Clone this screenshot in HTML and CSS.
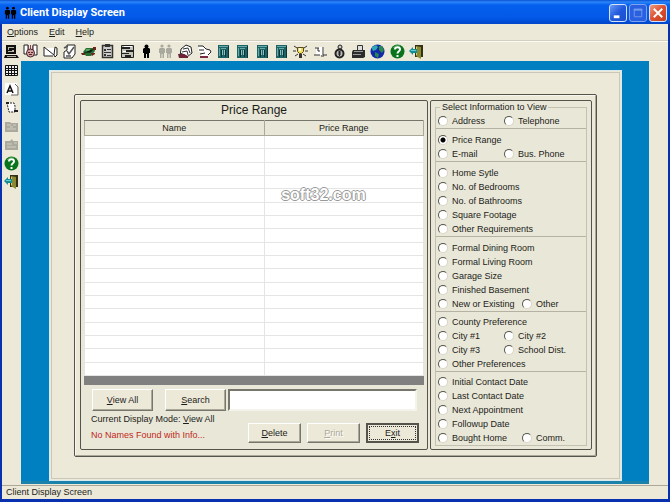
FILE: index.html
```html
<!DOCTYPE html>
<html lang="en">
<head>
    <meta charset="UTF-8">
    <meta name="viewport" content="width=device-width, initial-scale=1.0">
    <title>Client Display Screen</title>
    <link rel="stylesheet" href="styles.css">
</head>
<body>
    <!-- shared icons -->
    <svg class="sprite" aria-hidden="true">
        <symbol id="building" viewBox="0 0 15 15">
            <path fill="#1d6468" d="M2 1h11v13H2z"/>
            <path fill="#69aaa7" d="M3 2h9v1H3zM3 4h1v8H3zM5 4h5v1H5z"/>
            <path fill="#0b3438" d="M5 6h1v7H5zM9 6h1v7H9zM12 2h1v12h-1z"/>
            <path fill="#8fc0bb" d="M6 6h1v5H6zM8 6h1v5H8z"/>
        </symbol>
        <symbol id="help" viewBox="0 0 15 15">
            <circle cx="7.500" cy="7.500" r="7" fill="#08751c"/>
            <path d="M3 4a6 6 0 0 1 7-2" fill="none" stroke="#4eaa55"/>
            <path d="M5 5.500c0-3 5-3 5 0 0 2-2.500 1.500-2.500 4" fill="none" stroke="#fff" stroke-width="2"/>
            <path fill="#fff" d="M6.500 11h2v2h-2z"/>
        </symbol>
        <symbol id="door" viewBox="0 0 15 15">
            <path fill="#343018" d="M6 1h8v12H6z"/>
            <path fill="#8a8a32" d="M7 2l5 1v12l-5-3z"/>
            <path fill="#d4ce72" d="M7 3h1v8H7z"/>
            <path fill="#168c94" d="M0 7l4-4v2h4v4H4v2z"/>
            <path fill="#65d0d3" d="M2 6h5v1H2z"/>
        </symbol>
        <symbol id="people" viewBox="0 0 15 15">
            <circle cx="4" cy="2" r="1.600"/><circle cx="11" cy="2" r="1.600"/>
            <path d="M2 4h4l1 1v4H6v5H4.500v-4h-1v4H2V9H1V5zM9 4h4l1 1v4h-1v5h-1.500v-4h-1v4H9V9H8V5z"/>
        </symbol>
    </svg>

    <div class="window">
        <header class="titlebar">
            <svg class="app-icon" viewBox="0 0 15 15"><use href="#people"/></svg>
            <h1>Client Display Screen</h1>
            <div class="window-buttons">
                <button class="win-btn" aria-label="Minimize"><svg viewBox="0 0 17 17"><path fill="#fff" d="M4 11h6v3H4z"/></svg></button>
                <button class="win-btn dim" aria-label="Maximize"><svg viewBox="0 0 17 17"><path fill="none" stroke="#719cf0" d="M4.500 4.500h8v8h-8z"/><path fill="#719cf0" d="M4 4h9v2H4z"/></svg></button>
                <button class="win-btn close" aria-label="Close"><svg viewBox="0 0 17 17"><path stroke="#fff" stroke-width="2" d="M4 4l9 9M13 4l-9 9"/></svg></button>
            </div>
        </header>

        <nav class="menu">
            <a href="#"><u>O</u>ptions</a>
            <a href="#"><u>E</u>dit</a>
            <a href="#"><u>H</u>elp</a>
        </nav>

        <div class="toolbar">
            <div class="tools">
                <button aria-label="Computer"><svg viewBox="0 0 15 15"><path fill="#111" d="M2 1h10v9H2zM1 11h12l2 3H0z"/><path fill="#b8b8a8" d="M4 3h6v1H5v2h5v2H4V7h4V6H4zM3 12h9v1H3z"/></svg></button>
                <button aria-label="Reader"><svg viewBox="0 0 15 15"><path fill="#fff" stroke="#222" d="M1 1h4v9H1zM10 1h4v10h-4z"/><path fill="#7d4650" d="M5 1h1v6H5zM7 1h1v5H7zM9 2h1v4H9z"/><circle cx="7.500" cy="9" r="4" fill="#d6a19d" stroke="#442530"/><path fill="#4e2630" d="M5 8h2v1H5zM8 8h2v1H8zM6 10h3v1H6z"/></svg></button>
                <button aria-label="Letter"><svg viewBox="0 0 15 15"><path fill="#fff" d="M1 4h12v8H1z"/><path fill="none" stroke="#222" d="M1 3v9h9M1 3l10 8M12 3l2 1v7l-2 2-1-2z"/></svg></button>
                <button aria-label="Edit note"><svg viewBox="0 0 15 15"><path fill="#fff" stroke="#222" d="M5 1h8v9l-3 4H2V8l3-2z"/><path fill="none" stroke="#555" stroke-width="1.500" d="M2 4l4-2M5 7l2 3 5-7M4 12h5"/></svg></button>
                <button aria-label="Turtle"><svg viewBox="0 0 15 15"><path fill="#267035" d="M2 8l3-4h8l1 3-4 5H5z"/><path fill="#72241b" d="M0 9h4v2H1zM10 9h4v1l-3 2zM12 3h3v3h-3z"/><path fill="#57a45d" d="M5 5h4v2H5z"/><path stroke="#143a1b" d="M3 9l7-1 2-3"/></svg></button>
                <button aria-label="Clipboard"><svg viewBox="0 0 15 15"><path fill="#ccc" stroke="#333" stroke-width="1.500" d="M2.500 1.500h10v12h-10z"/><path fill="#333" d="M5 0h5v3H5zM4 5h2v2H4zM7 5h4v1H7zM4 8h7v1H4zM4 10h2v2H4zM7 11h4v1H7z"/></svg></button>
                <button aria-label="Form"><svg viewBox="0 0 15 15"><path fill="#c4c4b9" stroke="#222" d="M1.500 1.500h12v12h-12z"/><path fill="#222" d="M2 3h8v2H2zM6 6h7v2H6zM2 9h7v1H2zM5 11h6v2H5z"/><path fill="#fff" d="M4 2h8v1H4zM3 7h3v1H3z"/></svg></button>
                <button aria-label="Client"><svg viewBox="0 0 15 15"><circle cx="7.500" cy="2.500" r="2"/><path d="M5 4h5l1 1v4h-1v5H8v-4H7v4H5V9H4V5z"/></svg></button>
                <button aria-label="Clients" disabled><svg class="gray" viewBox="0 0 15 15"><use href="#people"/></svg></button>
                <button aria-label="Phone"><svg viewBox="0 0 15 15"><path fill="#fff" stroke="#222" d="M3 5l5-4 5 2 1 6-5 4-7-1z"/><path fill="none" stroke="#333" d="M5 5l5-1 2 5M4 8l5-1 1 4M2 9l5 2"/><path fill="#6b2437" d="M0 10h6l4 2v2H1z"/></svg></button>
                <button aria-label="Handshake"><svg viewBox="0 0 15 15"><path fill="#fff" d="M2 2h5l3 3 4 2v2l-3 4H3l2-4-4-2z"/><path fill="none" stroke="#222" d="M1 2h5l3 3 4 1 1 2-3 3M2 6h5M3 10l5-1"/><path stroke="#792d44" stroke-width="2" d="M3 13h8"/></svg></button>
                <button aria-label="Office 1"><svg><use href="#building"/></svg></button>
                <button aria-label="Office 2"><svg><use href="#building"/></svg></button>
                <button aria-label="Office 3"><svg><use href="#building"/></svg></button>
                <button aria-label="Office 4"><svg><use href="#building"/></svg></button>
                <button aria-label="Idea"><svg viewBox="0 0 15 15"><path stroke="#333" d="M1 2l3 2M14 2l-3 2M0 7h3M12 7h3M2 12l3-2M13 12l-3-2"/><path fill="#f2dc55" stroke="#5b4a12" d="M4.500 3.500h6v4l-2 2h-2l-2-2z"/><path fill="#333" d="M6 10h3v4H6z"/><path fill="#fff" d="M6 4h2v3H6z"/></svg></button>
                <button aria-label="Balance"><svg viewBox="0 0 15 15"><path fill="#fff" d="M3 3h8v8H3z"/><path fill="none" stroke="#333" d="M2 4h4M5 4v3h2M10 3v8h4M1 11h6M8 12h3"/></svg></button>
                <button aria-label="Money"><svg viewBox="0 0 15 15"><circle cx="8" cy="3" r="2" fill="#ccc" stroke="#222"/><circle cx="7.500" cy="9.500" r="4" fill="#bbb" stroke="#222" stroke-width="2"/><path stroke="#222" d="M6 8h3M6 10h3M7.500 7v5"/></svg></button>
                <button aria-label="Print"><svg viewBox="0 0 15 15"><path fill="#ddd" stroke="#333" d="M6.500 1.500h5v5h-5z"/><path fill="#2b2b2b" d="M2 6h12v7l-2 1H1V8z"/><path fill="#999" d="M3 7h9v1H3zM2 10h8v1H2z"/></svg></button>
                <button aria-label="Web"><svg viewBox="0 0 15 15"><circle cx="7.500" cy="7.500" r="7" fill="#1429a8"/><path fill="#31a6b7" d="M2 3l4-2 2 2-2 3-3 1-1-2z"/><path fill="#28884d" d="M9 2h3l2 4-2 3-3-3zM5 8l4 2-1 4-3-2z"/></svg></button>
                <button aria-label="Help"><svg><use href="#help"/></svg></button>
                <button aria-label="Exit"><svg><use href="#door"/></svg></button>
            </div>
        </div>

        <main class="workspace">
            <aside class="side-tools">
                <button aria-label="Calendar"><svg viewBox="0 0 15 15"><path fill="#eee" stroke="#111" d="M1.500 2.500h12v10h-12z"/><path stroke="#111" d="M1 5.500h13M1 7.500h13M1 10.500h13M4.500 2v11M7.500 2v11M10.500 2v11"/></svg></button>
                <button aria-label="Text"><svg viewBox="0 0 15 15"><path fill="#fff" d="M1 1h12v12H1z"/><path fill="none" stroke="#111" stroke-width="1.500" d="M3 11l3-7 3 7M4 9h4"/><path fill="none" stroke="#666" d="M11 2l3 3v8H7"/></svg></button>
                <button aria-label="Note"><svg viewBox="0 0 15 15"><path fill="#fff" stroke="#222" stroke-dasharray="2 1" d="M3 3h7l1 3v6H5z"/><path stroke="#222" stroke-width="2" d="M2 3h3M10 11h4"/></svg></button>
                <button aria-label="Open record" disabled><svg viewBox="0 0 15 15"><path fill="#aaa99d" d="M1 3h5l1 1h7v9H1z"/><path fill="none" stroke="#d2d0c3" d="M3 6h4M9 6h3M3 10h9M6 8h3"/></svg></button>
                <button aria-label="Save record" disabled><svg viewBox="0 0 15 15"><path fill="#aaa99d" d="M1 4h5l2-2 1 2h5v9H1z"/><path fill="none" stroke="#d2d0c3" d="M3 7h5M10 6h3M3 10h9"/></svg></button>
                <button aria-label="Help"><svg><use href="#help"/></svg></button>
                <button aria-label="Exit"><svg><use href="#door"/></svg></button>
            </aside>

            <div class="canvas">
                <div class="sheet">
                    <div class="frame">
                        <section class="list-panel">
                            <h2>Price Range</h2>
                            <div class="table-wrap">
                                <table>
                                    <thead>
                                        <tr><th>Name</th><th>Price Range</th></tr>
                                    </thead>
                                    <tbody>
                                        <tr><td></td><td></td></tr>
                                        <tr><td></td><td></td></tr>
                                        <tr><td></td><td></td></tr>
                                        <tr><td></td><td></td></tr>
                                        <tr><td></td><td></td></tr>
                                        <tr><td></td><td></td></tr>
                                        <tr><td></td><td></td></tr>
                                        <tr><td></td><td></td></tr>
                                        <tr><td></td><td></td></tr>
                                        <tr><td></td><td></td></tr>
                                        <tr><td></td><td></td></tr>
                                        <tr><td></td><td></td></tr>
                                        <tr><td></td><td></td></tr>
                                        <tr><td></td><td></td></tr>
                                        <tr><td></td><td></td></tr>
                                        <tr><td></td><td></td></tr>
                                        <tr><td></td><td></td></tr>
                                        <tr><td></td><td></td></tr>
                                    </tbody>
                                </table>
                                <span class="watermark">soft32.com</span>
                            </div>
                            <div class="search-row">
                                <button class="btn wide"><u>V</u>iew All</button>
                                <button class="btn wide"><u>S</u>earch</button>
                                <input type="text" aria-label="Search text">
                            </div>
                            <div class="bottom-row">
                                <div class="messages">
                                    <p>Current Display Mode: <u>V</u>iew All</p>
                                    <p class="warning">No Names Found with Info...</p>
                                </div>
                                <div class="actions">
                                    <button class="btn"><u>D</u>elete</button>
                                    <button class="btn" disabled><u>P</u>rint</button>
                                    <button class="btn default">E<u>x</u>it</button>
                                </div>
                            </div>
                        </section>

                        <section class="info-panel">
                            <fieldset>
                                <legend>Select Information to View</legend>
                                <div class="group first">
                                    <div class="row"><label><input type="radio" name="info">Address</label><label><input type="radio" name="info">Telephone</label></div>
                                </div>
                                <div class="group">
                                    <div class="row"><label><input type="radio" name="info" checked>Price Range</label></div>
                                    <div class="row"><label><input type="radio" name="info">E-mail</label><label><input type="radio" name="info">Bus. Phone</label></div>
                                </div>
                                <div class="group">
                                    <div class="row"><label><input type="radio" name="info">Home Sytle</label></div>
                                    <div class="row"><label><input type="radio" name="info">No. of Bedrooms</label></div>
                                    <div class="row"><label><input type="radio" name="info">No. of Bathrooms</label></div>
                                    <div class="row"><label><input type="radio" name="info">Square Footage</label></div>
                                    <div class="row"><label><input type="radio" name="info">Other Requirements</label></div>
                                </div>
                                <div class="group">
                                    <div class="row"><label><input type="radio" name="info">Formal Dining Room</label></div>
                                    <div class="row"><label><input type="radio" name="info">Formal Living Room</label></div>
                                    <div class="row"><label><input type="radio" name="info">Garage Size</label></div>
                                    <div class="row"><label><input type="radio" name="info">Finished Basement</label></div>
                                    <div class="row long"><label><input type="radio" name="info">New or Existing</label><label><input type="radio" name="info">Other</label></div>
                                </div>
                                <div class="group tight">
                                    <div class="row"><label><input type="radio" name="info">County Preference</label></div>
                                    <div class="row"><label><input type="radio" name="info">City #1</label><label><input type="radio" name="info">City #2</label></div>
                                    <div class="row"><label><input type="radio" name="info">City #3</label><label><input type="radio" name="info">School Dist.</label></div>
                                    <div class="row"><label><input type="radio" name="info">Other Preferences</label></div>
                                </div>
                                <div class="group tight">
                                    <div class="row"><label><input type="radio" name="info">Initial Contact Date</label></div>
                                    <div class="row"><label><input type="radio" name="info">Last Contact Date</label></div>
                                    <div class="row"><label><input type="radio" name="info">Next Appointment</label></div>
                                    <div class="row"><label><input type="radio" name="info">Followup Date</label></div>
                                    <div class="row long"><label><input type="radio" name="info">Bought Home</label><label><input type="radio" name="info">Comm.</label></div>
                                </div>
                            </fieldset>
                        </section>
                    </div>
                </div>
            </div>
        </main>

        <footer class="statusbar">Client Display Screen</footer>
    </div>
</body>
</html>
```
FILE: styles.css
```css
:root {
    --face: #ece9d8;
    --panel: #e9e7d7;
    --shadow: #aca899;
    --dark: #55544c;
    --canvas: #0080c0;
    --text: #1c1c1a;
}

* {
    margin: 0;
    padding: 0;
    box-sizing: border-box;
}

body {
    font-family: 'Liberation Sans', Arial, sans-serif;
    font-size: 9px;
    line-height: 14px;
    color: var(--text);
    background: var(--face);
}

button,
input {
    font: inherit;
    color: inherit;
}

.sprite {
    display: none;
}

.window {
    display: flex;
    flex-direction: column;
    min-height: 100vh;
    background: var(--face);
    border: solid #0831b0;
    border-width: 0 2px 3px;
}

/* title bar */
.titlebar {
    display: flex;
    align-items: center;
    height: 24px;
    margin: 0 -2px;
    padding: 2px 3px 0 4px;
    background: linear-gradient(#0a50d0 0, #2b86fa 2px, #0560ee 5px, #0358e8 18px, #0146c8 24px);
}

.app-icon {
    width: 13px;
    height: 14px;
    margin-right: 3px;
}

.titlebar h1 {
    flex: 1;
    font-family: Roboto, sans-serif;
    font-size: 11px;
    font-weight: 700;
    color: #fff;
}

.window-buttons {
    display: flex;
    gap: 2px;
}

.win-btn {
    width: 18px;
    height: 18px;
    border: 1px solid #d5e2fb;
    border-radius: 3px;
    background: linear-gradient(135deg, #6b9af5, #2059dc 50%, #1c4fcb);
}

.win-btn svg {
    display: block;
    width: 100%;
    height: 100%;
}

.win-btn.dim {
    border-color: #7da4f0;
    background: #2a5fdf;
}

.win-btn.close {
    background: linear-gradient(135deg, #f09a7e, #dc5030 50%, #c23e1c);
}

/* menu and toolbars */
.menu {
    display: flex;
    gap: 11px;
    height: 17px;
    padding: 1px 5px 0;
    border-bottom: 1px solid #d2cfbf;
}

.menu a {
    color: inherit;
    text-decoration: none;
}

.toolbar {
    height: 20px;
    padding: 2px 2px 0;
    border-top: 1px solid #fbfaf4;
}

.tools {
    display: flex;
    justify-content: space-between;
    width: 420px;
}

.tools button,
.side-tools button {
    display: block;
    width: 15px;
    height: 15px;
    border: 0;
    background: none;
}

.tools svg,
.side-tools svg {
    display: block;
    width: 15px;
    height: 15px;
}

.gray {
    fill: #aaa99d;
}

.workspace {
    display: flex;
    align-items: stretch;
    flex: 1;
    padding-right: 19px;
}

.side-tools {
    display: flex;
    flex-direction: column;
    justify-content: space-between;
    width: 19px;
    height: 128px;
    padding: 2px 2px 0;
}

.canvas {
    display: flex;
    flex: 1;
    padding: 9px 27px 0 28px;
    background: var(--canvas);
    border-bottom: 3px solid #1b82ac;
}

.sheet {
    display: flex;
    flex: 1;
    padding: 23px 24px;
    border: 1px solid #d8eaf0;
    outline: 1px solid #c9c7ba;
    outline-offset: -3px;
    background: var(--face);
}

.frame {
    display: flex;
    flex: 1;
    gap: 2px;
    padding: 5px 4px 6px 5px;
    border: 1px solid var(--dark);
    border-radius: 2px;
    box-shadow: inset 1px 1px #f8f7ef, inset -1px -1px var(--shadow);
}

.list-panel,
.info-panel {
    border: 1px solid var(--dark);
    border-radius: 2px;
    background: var(--panel);
}

/* client list */
.list-panel {
    flex: 1;
    padding: 0 3px 6px;
}

.list-panel h2 {
    font-size: 12px;
    font-weight: 400;
    line-height: 19px;
    text-align: center;
}

.table-wrap {
    position: relative;
    border-bottom: 9px solid #808080;
}

table {
    width: 100%;
    height: 256px;
    table-layout: fixed;
    border-collapse: collapse;
    border: 1px solid #77766c;
    background: #fff;
}

th {
    height: 15px;
    font-size: 9px;
    font-weight: 400;
    line-height: 13px;
    background: var(--panel);
    border: 1px solid var(--shadow);
    border-top-color: #77766c;
}

th:first-child {
    width: 53%;
}

td {
    border: 1px solid #e5e5e5;
}

.watermark {
    position: absolute;
    top: 66px;
    left: 58%;
    font-size: 16px;
    font-weight: 700;
    line-height: 18px;
    color: #fff;
    text-shadow: 1px 0 #999, -1px 0 #999, 0 1px #999, 0 -1px #999;
}

.search-row {
    display: flex;
    align-items: center;
    gap: 12px;
    padding: 4px 7px 0 8px;
}

.btn {
    width: 53px;
    height: 20px;
    line-height: 16px;
    text-align: center;
    background: var(--face);
    border: 1px solid;
    border-color: #fff #77766c #77766c #fff;
    box-shadow: inset -1px -1px var(--shadow);
}

.btn.wide {
    width: 61px;
    height: 22px;
}

.btn:disabled {
    color: var(--shadow);
    text-shadow: 1px 1px #fff;
}

.btn.default {
    border: 2px solid var(--dark);
    outline: 1px dotted #333;
    outline-offset: -4px;
    box-shadow: none;
}

.search-row input {
    flex: 1;
    min-width: 0;
    height: 22px;
    margin-left: -10px;
    padding: 0 4px;
    border: 2px solid;
    border-color: #77766c #f5f4ec #f5f4ec #77766c;
    background: #fff;
}

.bottom-row {
    display: flex;
    justify-content: space-between;
    align-items: flex-end;
    padding: 0 5px 0 7px;
}

.messages p {
    line-height: 16px;
}

.messages .warning {
    color: #c0281c;
}

.actions {
    display: flex;
    gap: 6px;
}

/* radio panel */
.info-panel {
    width: 162px;
    padding: 0 4px 3px;
}

fieldset {
    min-width: 0;
    border: 1px solid #c4c1b1;
}

legend {
    margin-left: 4px;
    padding: 0 2px;
    line-height: 13px;
}

.group {
    padding-top: 4px;
    border-bottom: 1px solid #b5b2a3;
}

.group.first {
    padding-top: 0;
}

.group.tight {
    padding-top: 3px;
}

.group:last-child {
    border-bottom: 0;
}

.row {
    display: flex;
    padding-left: 2px;
}

.row label {
    display: flex;
    align-items: center;
    gap: 4px;
    white-space: nowrap;
}

.row label:first-child {
    min-width: 66px;
}

.row.long label:first-child {
    min-width: 84px;
}

.row input {
    appearance: none;
    width: 10px;
    height: 10px;
    border: 1px solid;
    border-color: #55544c #d8d5c5 #d8d5c5 #55544c;
    border-radius: 50%;
    background: #fff;
}

.row input:checked {
    background: radial-gradient(#000 2px, #fff 3px);
}

/* status bar */
.statusbar {
    height: 14px;
    margin-top: 1px;
    padding: 0 4px;
    line-height: 13px;
    border-top: 1px solid var(--shadow);
}
```
